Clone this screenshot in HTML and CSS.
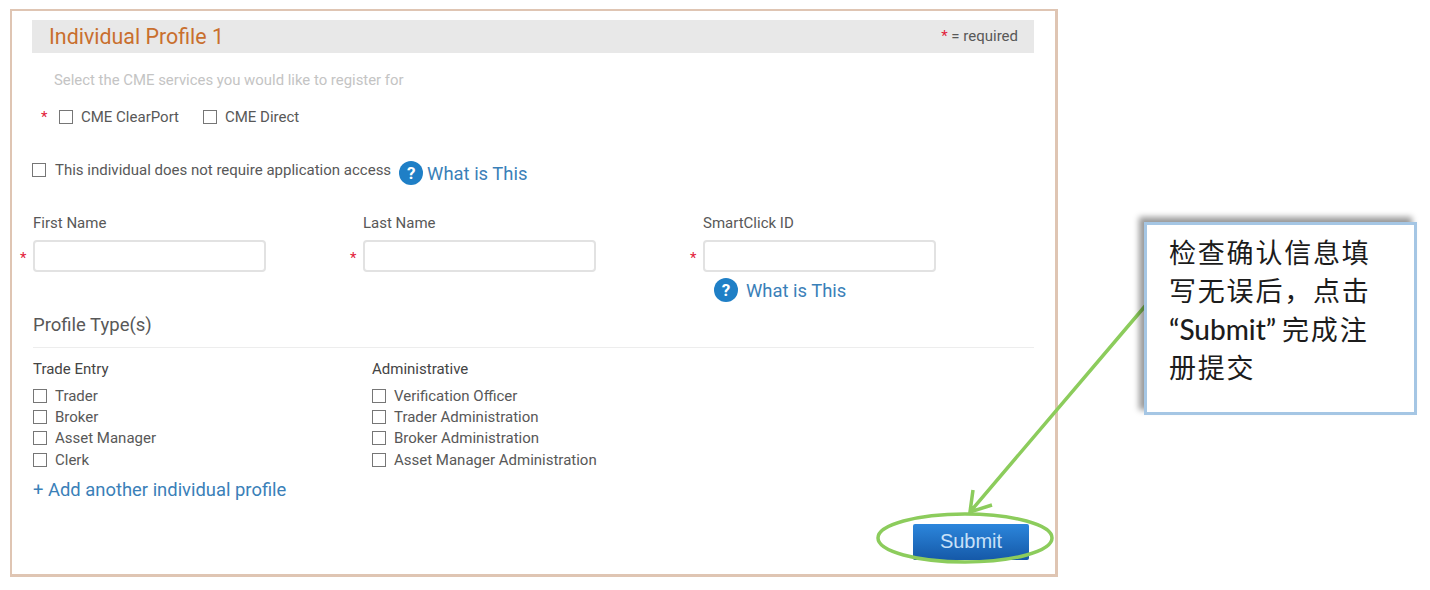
FILE: index.html
```html
<!DOCTYPE html>
<html lang="zh-CN">
  <head>
    <meta charset="UTF-8" />
    <title>Individual Profile</title>
    <link rel="stylesheet" href="styles.css">
  </head>
  <body>
    <div class="frame">
      <div class="bar">
        <h2>Individual Profile 1</h2>
        <span class="legend"><span class="star">*</span> = required</span>
      </div>

      <p class="prompt">Select the CME services you would like to register for</p>

      <div class="services">
        <span class="star">*</span>
        <label class="check"><input type="checkbox" />CME ClearPort</label>
        <label class="check"><input type="checkbox" />CME Direct</label>
      </div>

      <div class="access">
        <label class="check"><input type="checkbox" />This individual does not require application access</label>
        <a class="help"><span class="help-icon">?</span>What is This</a>
      </div>

      <div class="fields">
        <div class="field">
          <label for="first">First Name</label>
          <div class="input-wrap"><span class="star">*</span><input type="text" id="first" /></div>
        </div>
        <div class="field">
          <label for="last">Last Name</label>
          <div class="input-wrap"><span class="star">*</span><input type="text" id="last" /></div>
        </div>
        <div class="field">
          <label for="click">SmartClick ID</label>
          <div class="input-wrap"><span class="star">*</span><input type="text" id="click" /></div>
          <a class="help help-below"><span class="help-icon">?</span>What is This</a>
        </div>
      </div>

      <h3 class="section">Profile Type(s)</h3>

      <div class="types">
        <div class="type-col">
          <h4>Trade Entry</h4>
          <label class="check"><input type="checkbox" />Trader</label>
          <label class="check"><input type="checkbox" />Broker</label>
          <label class="check"><input type="checkbox" />Asset Manager</label>
          <label class="check"><input type="checkbox" />Clerk</label>
        </div>
        <div class="type-col">
          <h4>Administrative</h4>
          <label class="check"><input type="checkbox" />Verification Officer</label>
          <label class="check"><input type="checkbox" />Trader Administration</label>
          <label class="check"><input type="checkbox" />Broker Administration</label>
          <label class="check"><input type="checkbox" />Asset Manager Administration</label>
        </div>
      </div>

      <a class="add">+ Add another individual profile</a>

      <div class="actions">
        <button type="button">Submit</button>
      </div>
    </div>

    <!-- annotation drawn over the screenshot -->
    <svg class="marks" width="1430" height="590" viewBox="0 0 1430 590">
      <ellipse cx="965" cy="538" rx="87" ry="24" />
      <path d="M1146 305 L970 512 M973 490 L970 512 L992 505" />
    </svg>
    <div class="callout">
      检查确认信息填<br />
      写无误后，点击<br />
      <span class="latin">“Submit”</span> 完成注<br />
      册提交
    </div>
  </body>
</html>
```

FILE: styles.css
```css
* {
  box-sizing: border-box;
}
body {
  margin: 0;
  height: 590px;
  overflow: hidden;
  position: relative;
  background: #ffffff;
  font-family: Roboto, "Liberation Sans", sans-serif;
  font-size: 15px;
  color: #585858;
}
.frame {
  width: 1048px;
  height: 568px;
  margin: 9px 0 0 10px;
  padding: 9px 21px 0 21px;
  border: 2px solid #dfc5b3;
  border-right-width: 3px;
  border-bottom-width: 3px;
}
.bar {
  height: 33px;
  margin-left: -1px;
  padding: 0 16px 1px 17px;
  display: flex;
  align-items: center;
  justify-content: space-between;
  background: #e8e8e8;
}
.bar h2 {
  margin: 0;
  font-size: 21.4px;
  font-weight: 400;
  color: #c96f2e;
}
.star {
  color: #e2203a;
}
.prompt {
  height: 20px;
  margin: 17px 0 0;
  padding-left: 21px;
  line-height: 20px;
  font-size: 14.9px;
  color: #c4c4c4;
}
.check {
  display: flex;
  align-items: center;
}
.check input {
  appearance: none;
  width: 14px;
  height: 14px;
  margin: 0 8px 0 0;
  border: 1px solid #767676;
  background: #ffffff;
  flex: none;
}
.services {
  height: 20px;
  margin-top: 17px;
  padding-left: 8px;
  display: flex;
  align-items: center;
}
.services .star {
  width: 18px;
}
.services .check {
  margin-right: 24px;
}
.access {
  height: 24px;
  margin-top: 34px;
  display: flex;
  align-items: center;
}
.access .check {
  margin: -6px 8px 0 -1px;
}
.access .check input {
  margin-right: 9px;
}
.help {
  display: flex;
  align-items: center;
  font-size: 18.4px;
  color: #3a80b8;
}
.help-icon {
  width: 24px;
  height: 24px;
  margin-right: 4px;
  border-radius: 50%;
  background: #1f7fc6;
  color: #ffffff;
  font-size: 17px;
  font-weight: 700;
  line-height: 24px;
  text-align: center;
}
.fields {
  margin-top: 28px;
  display: grid;
  grid-template-columns: 330px 340px 1fr;
}
.field label {
  display: block;
  height: 20px;
  line-height: 20px;
}
.input-wrap {
  position: relative;
  margin-top: 7px;
}
.input-wrap .star {
  position: absolute;
  left: -13px;
  top: 8px;
  line-height: 20px;
}
.field input {
  display: block;
  width: 233px;
  height: 32px;
  border: 2px solid #e2e2e2;
  border-radius: 4px;
  background: #ffffff;
}
.help-below {
  height: 24px;
  margin: 6px 0 0 11px;
}
.help-below .help-icon {
  margin-right: 8px;
}
.section {
  height: 24px;
  margin: 11px 0 0;
  line-height: 24px;
  font-size: 18.5px;
  font-weight: 400;
}
.types {
  margin-top: 10px;
  padding-top: 11px;
  border-top: 1px solid #ededed;
  display: grid;
  grid-template-columns: 339px 1fr;
}
.type-col h4 {
  height: 20px;
  margin: 0 0 6px;
  line-height: 20px;
  font-size: 15px;
  font-weight: 400;
  color: #444444;
}
.type-col .check {
  height: 21.4px;
}
.add {
  display: block;
  height: 24px;
  margin-top: 7px;
  line-height: 24px;
  font-size: 18.4px;
  color: #3a80b8;
}
.actions {
  margin-top: 22px;
  padding-right: 5px;
  display: flex;
  justify-content: flex-end;
}
.actions button {
  width: 116px;
  height: 36px;
  border: none;
  border-radius: 2px;
  background: linear-gradient(#2c86dc, #1559a8);
  color: #c9e1f8;
  font-family: "Liberation Sans", sans-serif;
  font-size: 20px;
}
.marks {
  position: absolute;
  left: 0;
  top: 0;
  fill: none;
  stroke: #8ccc5c;
  stroke-width: 3.5;
}
.callout {
  position: absolute;
  left: 1144px;
  top: 222px;
  width: 273px;
  height: 193px;
  padding: 8px 0 0 22px;
  border: 3px solid #a5c6e4;
  background: #ffffff;
  box-shadow: -5px -5px 6px rgba(0, 0, 0, 0.4);
  font-family: "Noto Sans CJK SC", sans-serif;
  font-size: 27px;
  line-height: 38.4px;
  letter-spacing: 1.8px;
  word-spacing: -2px;
  color: #1c1c1c;
  white-space: nowrap;
}
.callout .latin {
  font-family: Lato, sans-serif;
  font-size: 28px;
  font-weight: 500;
  letter-spacing: 0;
}
```
